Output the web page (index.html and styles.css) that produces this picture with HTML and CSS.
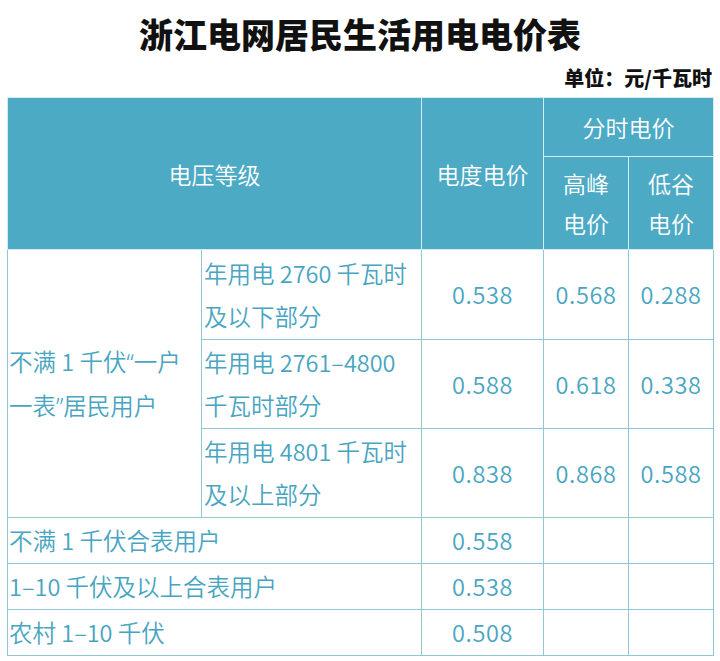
FILE: index.html
```html
<!DOCTYPE html>
<html lang="zh-CN">
<head>
<meta charset="utf-8">
<title>浙江电网居民生活用电电价表</title>
<link rel="stylesheet" href="styles.css">
</head>
<body>
<div class="page">
  <h1 class="title">浙江电网居民生活用电电价表</h1>
  <div class="unit">单位：元/千瓦时</div>
  <table class="price">
    <colgroup>
      <col class="c0"><col class="c1"><col class="c2"><col class="c3"><col class="c4">
    </colgroup>
    <thead>
      <tr class="h-top">
        <th colspan="2" rowspan="2">电压等级</th>
        <th rowspan="2">电度电价</th>
        <th colspan="2" class="sub-title">分时电价</th>
      </tr>
      <tr class="h-bottom">
        <th class="two-line">高峰<br>电价</th>
        <th class="two-line">低谷<br>电价</th>
      </tr>
    </thead>
    <tbody>
      <tr class="r-tall">
        <td rowspan="3" class="label first">不满 1 千伏<span class="q">“</span>一户<br>一表<span class="q">”</span>居民用户</td>
        <td class="label">年用电 2760 千瓦时<br>及以下部分</td>
        <td class="num">0.538</td>
        <td class="num">0.568</td>
        <td class="num">0.288</td>
      </tr>
      <tr class="r-mid">
        <td class="label">年用电 2761–4800<br>千瓦时部分</td>
        <td class="num">0.588</td>
        <td class="num">0.618</td>
        <td class="num">0.338</td>
      </tr>
      <tr class="r-mid">
        <td class="label">年用电 4801 千瓦时<br>及以上部分</td>
        <td class="num">0.838</td>
        <td class="num">0.868</td>
        <td class="num">0.588</td>
      </tr>
      <tr class="r-short">
        <td colspan="2" class="label first">不满 1 千伏合表用户</td>
        <td class="num">0.558</td>
        <td></td>
        <td></td>
      </tr>
      <tr class="r-short">
        <td colspan="2" class="label first">1–10 千伏及以上合表用户</td>
        <td class="num">0.538</td>
        <td></td>
        <td></td>
      </tr>
      <tr class="r-short">
        <td colspan="2" class="label first">农村 1–10 千伏</td>
        <td class="num">0.508</td>
        <td></td>
        <td></td>
      </tr>
    </tbody>
  </table>
</div>
</body>
</html>
```

FILE: styles.css
```css
html, body {
  margin: 0;
  padding: 0;
  background: #ffffff;
}

body {
  font-family: "Noto Sans CJK SC", "Noto Sans", sans-serif;
}

.page {
  padding: 0 7px;
}

.title {
  margin: 0;
  height: 68px;
  line-height: 68px;
  text-align: center;
  font-size: 34px;
  font-weight: 900;
  color: #111111;
}

.unit {
  height: 29px;
  line-height: 20px;
  text-align: right;
  font-size: 20px;
  font-weight: 900;
  color: #111111;
  padding-right: 1px;
}

.price {
  border-collapse: collapse;
  table-layout: fixed;
  width: 706px;
}

.c0 { width: 194px; }
.c1 { width: 220px; }
.c2 { width: 122px; }
.c3 { width: 85px; }
.c4 { width: 85px; }

.price th {
  background: #4caac5;
  color: #ffffff;
  font-weight: 350;
  font-size: 23px;
  border: 1px solid #d3ebf2;
  padding: 0;
  text-align: center;
  vertical-align: middle;
}

.h-top { height: 59px; }
.h-bottom { height: 93px; }

.sub-title {
  padding-top: 6px;
}

.two-line {
  line-height: 40px;
  padding-top: 4px;
}

.price td {
  border: 1px solid #8fc7d6;
  color: #48a5c2;
  font-weight: 350;
  font-size: 23.5px;
  line-height: 43px;
  padding: 0 2px;
  vertical-align: middle;
}

.r-tall { height: 90px; }
.r-mid { height: 89px; }
.r-short { height: 46px; }

.label {
  text-align: left;
}

.label.first {
  padding-left: 1px;
}

.q {
  font-family: "Noto Sans", sans-serif;
}

.num {
  text-align: center;
  letter-spacing: 0.6px;
}
```
